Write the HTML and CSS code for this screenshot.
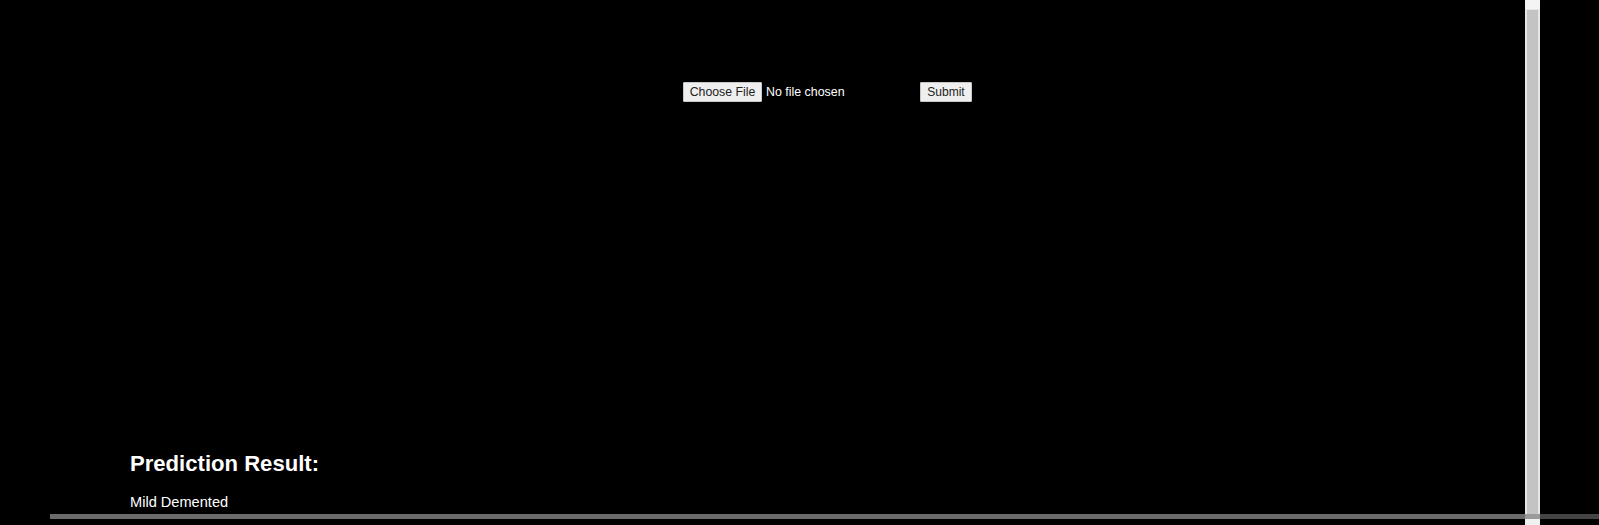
FILE: index.html
```html
<!DOCTYPE html>
<html lang="en">
<head>
<meta charset="utf-8">
<title>Prediction</title>
<link rel="stylesheet" href="styles.css">
</head>
<body>
<div class="screen">
  <main class="view">
    <div class="content">
      <form class="upload">
        <label class="file">
          <span class="btn">Choose File</span>
          <span class="file-name">No file chosen</span>
        </label>
        <button type="button" class="btn submit">Submit</button>
      </form>
      <h2 class="title">Prediction Result:</h2>
      <p class="result">Mild Demented</p>
    </div>
    <div class="htrack"><div class="hthumb"></div></div>
  </main>
  <div class="vscroll">
    <div class="vbtn-up"></div>
    <div class="vthumb"></div>
    <div class="vcross"></div>
    <div class="vbtn-down"></div>
  </div>
  <div class="rest">
    <div class="rest-fill"></div>
    <div class="rest-band"></div>
  </div>
</div>
</body>
</html>
```

FILE: styles.css
```css
html, body {
  margin: 0;
  padding: 0;
  background: #000;
  overflow: hidden;
}
body {
  font-family: "Liberation Sans", Arial, sans-serif;
  color: #fff;
}
.screen {
  display: flex;
  height: 525px;
  width: 1599px;
}
.view {
  width: 1525px;
  display: flex;
  flex-direction: column;
}
.content {
  flex: 1;
  padding: 82px 0 0 130px;
  display: flex;
  flex-direction: column;
  align-items: flex-start;
}
.upload {
  display: flex;
  align-items: center;
  margin: 0 0 0 553px;
  height: 20px;
}
.file {
  display: flex;
  align-items: center;
  width: 237px;
  white-space: nowrap;
}
.btn {
  box-sizing: border-box;
  height: 20px;
  padding: 0;
  display: inline-flex;
  align-items: center;
  justify-content: center;
  white-space: nowrap;
  background: #efefef;
  border: 1px solid #c8c8c8;
  border-radius: 1px;
  color: #222;
  font: 12.3px "Liberation Sans", Arial, sans-serif;
}
.file .btn {
  width: 79px;
  flex: none;
}
.file-name {
  margin-left: 4px;
  font-size: 12.4px;
  color: #fff;
}
.submit {
  width: 52px;
  font-size: 12px;
}
.title {
  margin: 349px 0 0;
  font-size: 22.1px;
  line-height: 25px;
  font-weight: bold;
}
.result {
  margin: 18px 0 0;
  font-size: 14.6px;
  line-height: 17px;
}
.htrack {
  height: 11px;
}
.hthumb {
  margin: 0 0 0 50px;
  height: 5px;
  background: #6b6b6b;
}
.vscroll {
  width: 15px;
  display: flex;
  flex-direction: column;
  background: #e6e6e6;
}
.vbtn-up {
  height: 9px;
  background: #f4f4f4;
}
.vthumb {
  flex: 1;
  margin: 1px 2px 0;
  background: #c3c3c3;
}
.vcross {
  height: 5px;
  background: #9a9a9a;
}
.vbtn-down {
  height: 6px;
  background: #f0f0f0;
}
.rest {
  flex: 1;
  display: flex;
  flex-direction: column;
}
.rest-fill {
  height: 514px;
}
.rest-band {
  height: 5px;
  background: #444;
}
```
